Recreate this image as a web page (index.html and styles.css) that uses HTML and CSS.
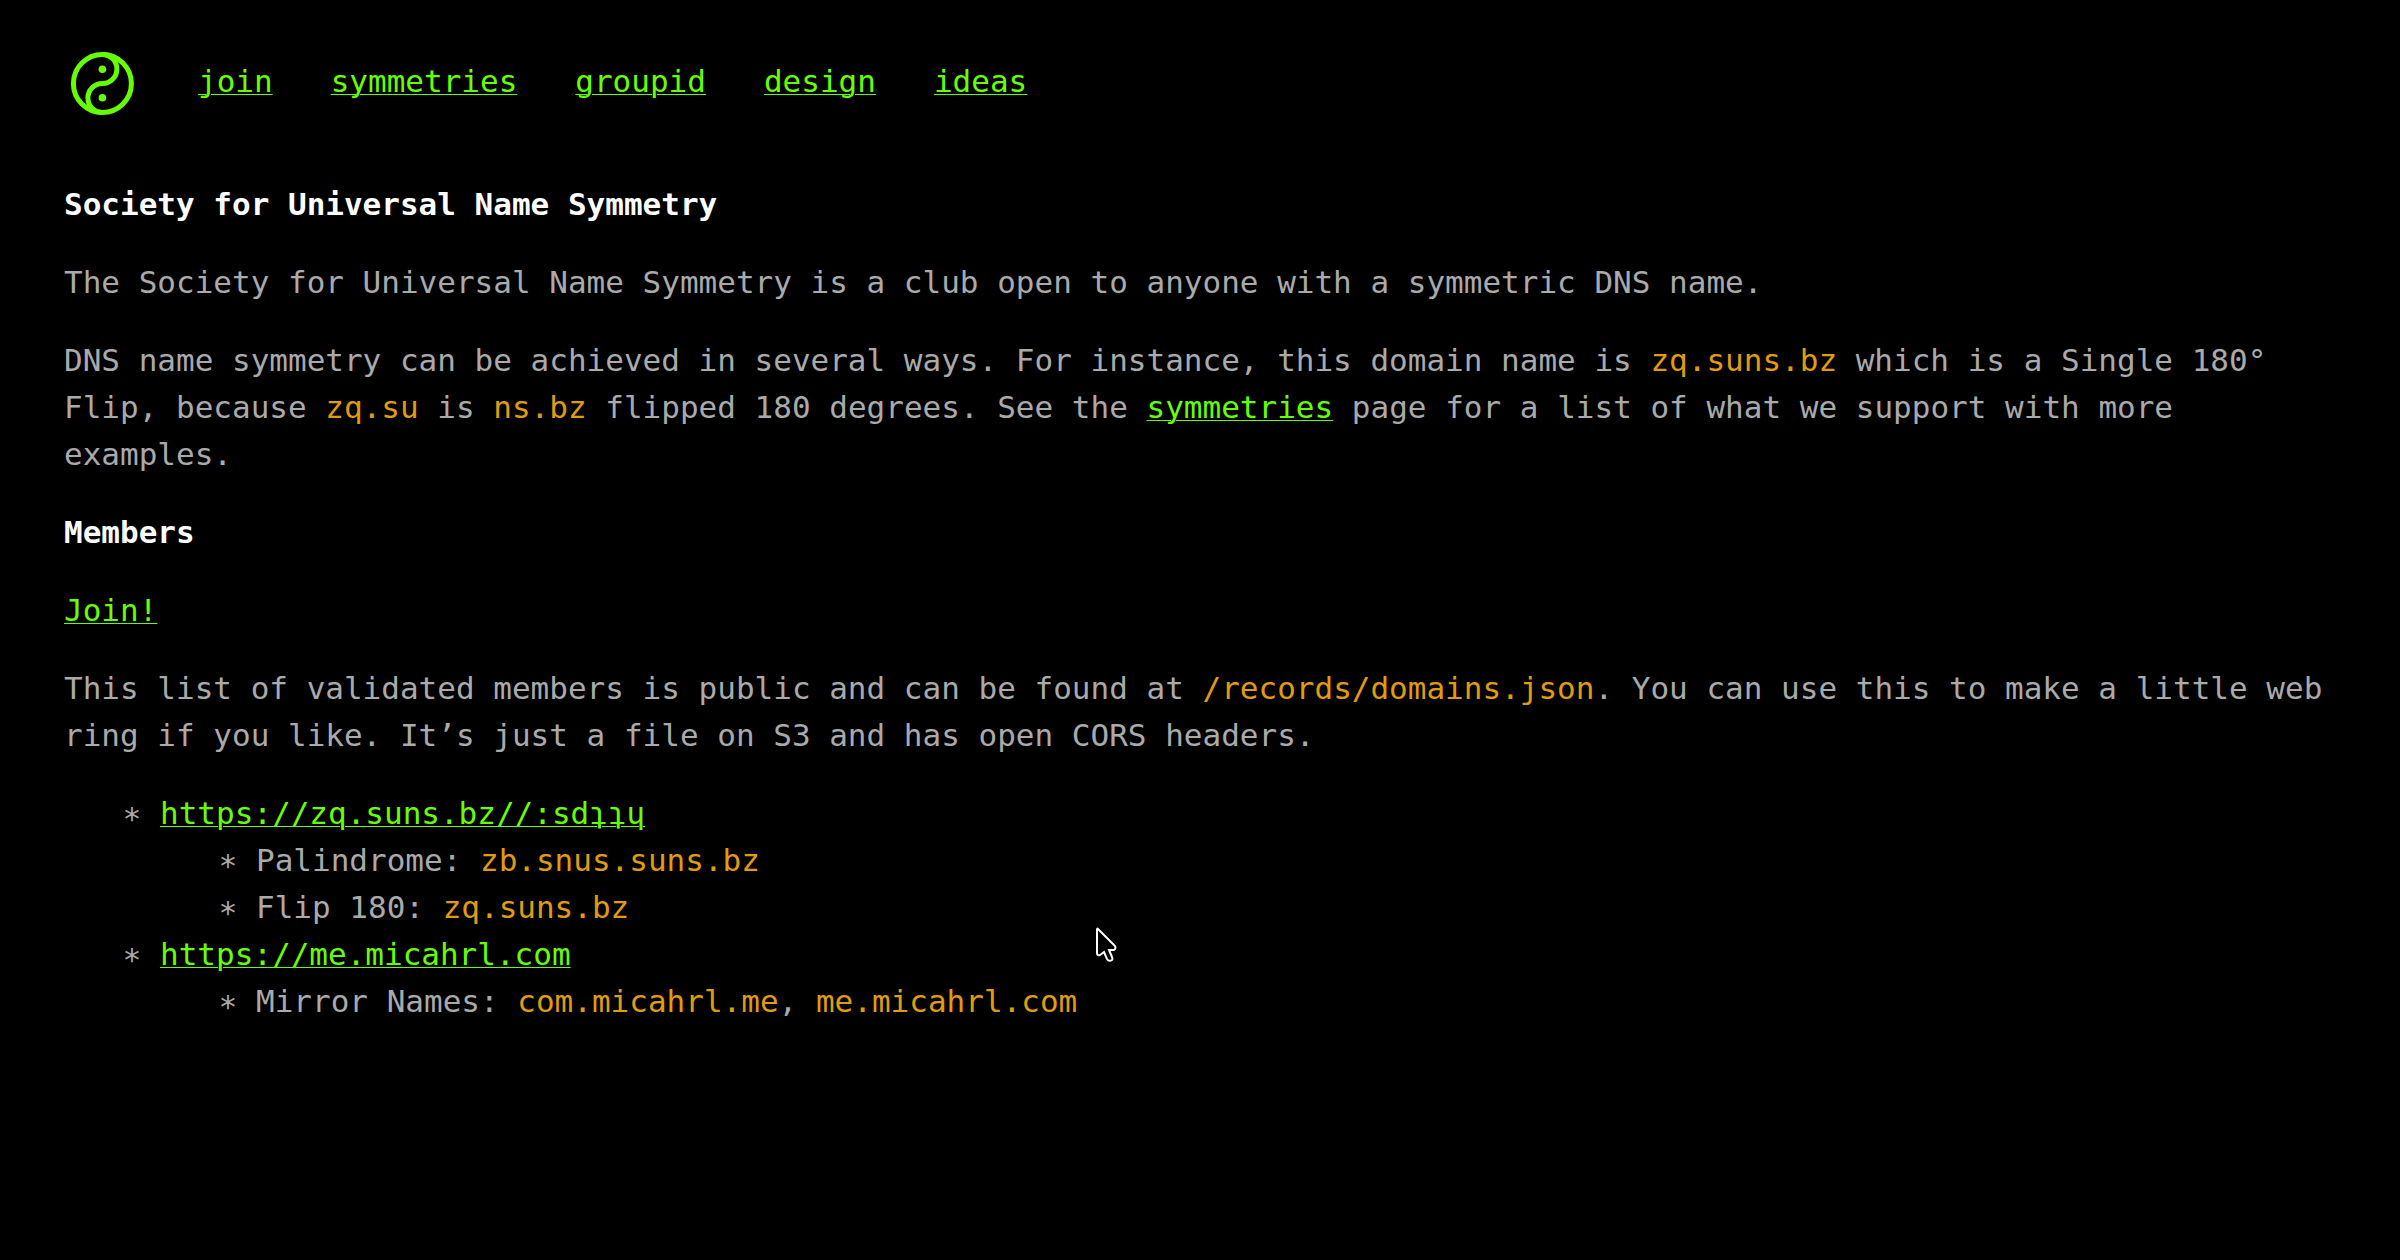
FILE: index.html
```html
<!DOCTYPE html>
<html lang="en">
<head>
<meta charset="utf-8">
<meta name="viewport" content="width=device-width, initial-scale=1">
<title>Society for Universal Name Symmetry</title>
<link rel="stylesheet" href="styles.css">
</head>
<body>

<header>
  <a class="logo" href="/" aria-label="Home">
    <svg viewBox="0 0 76 76">
      <g fill="none" stroke="currentColor" stroke-width="5">
        <circle cx="38.4" cy="38.5" r="29"/>
        <path d="M38.4 9.5 a14.5 14.5 0 0 1 0 29 a14.5 14.5 0 0 0 0 29"/>
      </g>
      <circle cx="38.4" cy="24.2" r="3.8" fill="currentColor"/>
      <circle cx="38.4" cy="52.8" r="3.8" fill="currentColor"/>
    </svg>
  </a>
  <nav>
    <a href="/join">join</a>
    <a href="/symmetries">symmetries</a>
    <a href="/groupid">groupid</a>
    <a href="/design">design</a>
    <a href="/ideas">ideas</a>
  </nav>
</header>

<main>
  <h1>Society for Universal Name Symmetry</h1>

  <p>The Society for Universal Name Symmetry is a club open to anyone with a symmetric DNS name.</p>

  <p>DNS name symmetry can be achieved in several ways. For instance, this domain name is <code>zq.suns.bz</code> which is a Single 180° Flip, because <code>zq.su</code> is <code>ns.bz</code> flipped 180 degrees. See the <a href="/symmetries">symmetries</a> page for a list of what we support with more examples.</p>

  <h2>Members</h2>

  <p><a href="/join">Join!</a></p>

  <p>This list of validated members is public and can be found at <code>/records/domains.json</code>. You can use this to make a little web ring if you like. It’s just a file on S3 and has open CORS headers.</p>

  <ul>
    <li><a href="https://zq.suns.bz">https://zq.suns.bz//:sdʇʇɥ</a>
      <ul>
        <li>Palindrome: <code>zb.snus.suns.bz</code></li>
        <li>Flip 180: <code>zq.suns.bz</code></li>
      </ul>
    </li>
    <li><a href="https://me.micahrl.com">https://me.micahrl.com</a>
      <ul>
        <li>Mirror Names: <code>com.micahrl.me</code>, <code>me.micahrl.com</code></li>
      </ul>
    </li>
  </ul>
</main>

<svg class="cursor" viewBox="0 0 24 38" aria-hidden="true">
  <path d="M3 3 V26 Q3 29 6 28 L10 25 L13 32 Q15 35 18 33 Q19 32 18 30 L15 23 L20 23 Q23 21 20 18 L4 2 Q3 1 3 3 Z"/>
</svg>

</body>
</html>
```
FILE: styles.css
```css
:root {
  --bg: #000;
  --text: #aaa;
  --heading: #fff;
  --link: #66ff00;
  --code: #e09c0c;
}

body {
  margin: 0;
  padding: 45px 64px;
  background: var(--bg);
  color: var(--text);
  font-family: "DejaVu Sans Mono", monospace;
  font-size: 31px;
  line-height: 47px;
}

a {
  color: var(--link);
  text-decoration-thickness: 1px;
  text-underline-offset: 2px;
}

code {
  color: var(--code);
  font: inherit;
}

header {
  display: flex;
  align-items: center;
  gap: 58px;
  margin-bottom: 60px;
}

nav {
  display: flex;
  flex-wrap: wrap;
  gap: 58px;
  padding-bottom: 4px;
}

.logo svg {
  display: block;
  width: 76px;
  height: 76px;
}

h1,
h2 {
  margin: 0 0 31px;
  color: var(--heading);
  font-size: 31px;
  font-weight: bold;
}

p {
  margin: 0 0 31px;
}

ul {
  margin: 0;
  padding-left: 96px;
  list-style-type: "∗ ";
}

.cursor {
  position: absolute;
  top: 927px;
  left: 1094px;
  width: 24px;
  height: 38px;
  fill: #000;
  stroke: #fff;
  stroke-width: 2px;
  pointer-events: none;
}
```
